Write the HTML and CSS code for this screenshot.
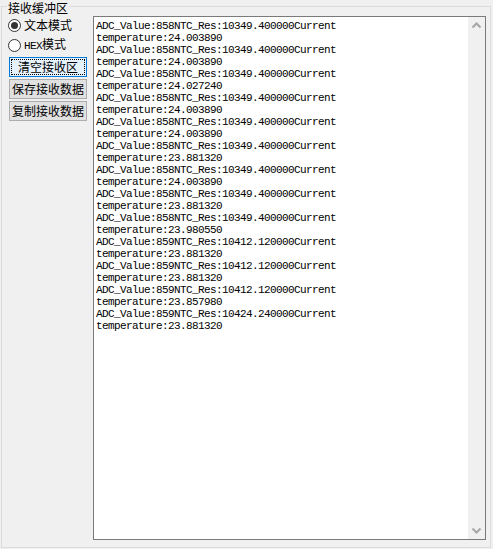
FILE: index.html
```html
<!DOCTYPE html>
<html>
    <head>
        <meta charset="UTF-8">
        <title>接收缓冲区</title>
        <link rel="stylesheet" href="styles.css">
    </head>
    <body>
        <div class="group">
            <span class="caption">接收缓冲区</span>
            <div class="side">
                <label class="opt"><span class="radio checked"></span><span>文本模式</span></label>
                <label class="opt"><span class="radio"></span><span><span class="latin">HEX</span>模式</span></label>
                <button class="btn focus">清空接收区</button>
                <button class="btn">保存接收数据</button>
                <button class="btn">复制接收数据</button>
            </div>
            <div class="recv">
<pre class="lines">ADC_Value:858NTC_Res:10349.400000Current
temperature:24.003890
ADC_Value:858NTC_Res:10349.400000Current
temperature:24.003890
ADC_Value:858NTC_Res:10349.400000Current
temperature:24.027240
ADC_Value:858NTC_Res:10349.400000Current
temperature:24.003890
ADC_Value:858NTC_Res:10349.400000Current
temperature:24.003890
ADC_Value:858NTC_Res:10349.400000Current
temperature:23.881320
ADC_Value:858NTC_Res:10349.400000Current
temperature:24.003890
ADC_Value:858NTC_Res:10349.400000Current
temperature:23.881320
ADC_Value:858NTC_Res:10349.400000Current
temperature:23.980550
ADC_Value:859NTC_Res:10412.120000Current
temperature:23.881320
ADC_Value:859NTC_Res:10412.120000Current
temperature:23.881320
ADC_Value:859NTC_Res:10412.120000Current
temperature:23.857980
ADC_Value:859NTC_Res:10424.240000Current
temperature:23.881320</pre>
                <div class="scroll">
                    <span class="arrow"><svg width="17" height="17" viewBox="0 0 17 17"><polyline points="4.5,10.5 8.5,6.5 12.5,10.5" fill="none" stroke="#a6a6a6" stroke-width="2"/></svg></span>
                    <span class="arrow"><svg width="17" height="17" viewBox="0 0 17 17"><polyline points="4.5,6.5 8.5,10.5 12.5,6.5" fill="none" stroke="#a6a6a6" stroke-width="2"/></svg></span>
                </div>
            </div>
        </div>
    </body>
</html>
```

FILE: styles.css
```css
body
{
    margin: 0;
    background: #f0f0f0;
    font-family: "Noto Sans CJK SC", sans-serif;
    font-size: 12px;
    color: #000;
    text-autospace: no-autospace;
}

.group
{
    position: relative;
    display: flex;
    gap: 6px;
    margin: 6px 0 0 1px;
    padding: 9px 4px 7px 7px;
    width: 490px;
    height: 542px;
    box-sizing: border-box;
    border: 1px solid #dcdcdc;
}
.group .caption
{
    position: absolute;
    top: -6px;
    left: 5px;
    padding: 0 1px;
    line-height: 13px;
    background: #f0f0f0;
}

.side
{
    display: flex;
    flex-direction: column;
    width: 78px;
    margin-top: -1px;
}
.side .opt
{
    display: flex;
    align-items: center;
    gap: 3px;
    height: 20px;
    margin-left: -1px;
    line-height: 12px;
}
.side .latin
{
    font-family: "Liberation Mono", monospace;
    font-size: 11px;
    letter-spacing: -0.6px;
}
.side .radio
{
    display: grid;
    place-items: center;
    width: 13px;
    height: 13px;
    box-sizing: border-box;
    border: 1px solid #333;
    border-radius: 50%;
    background: #fff;
}
.side .radio.checked::after
{
    content: "";
    width: 7px;
    height: 7px;
    border-radius: 50%;
    background: #333;
}
.side .btn
{
    position: relative;
    margin-top: 2px;
    padding: 0;
    width: 78px;
    height: 20px;
    font: inherit;
    line-height: 12px;
    color: #000;
    border: 1px solid #adadad;
    background: #e1e1e1;
}
.side .btn.focus
{
    border-color: #0078d7;
    background: #e5f1fb;
}
.side .btn.focus::after
{
    content: "";
    position: absolute;
    inset: 1px;
    border: 1px dotted #000;
}

.recv
{
    display: flex;
    width: 393px;
    height: 524px;
    box-sizing: border-box;
    border: 1px solid #7a7a7a;
    background: #fff;
}
.recv .lines
{
    flex: 1;
    margin: 0;
    padding: 3px 0 0 2px;
    font-family: "Liberation Mono", monospace;
    font-size: 11px;
    letter-spacing: -0.6px;
    line-height: 12px;
}
.recv .scroll
{
    display: flex;
    flex-direction: column;
    justify-content: space-between;
    width: 17px;
    background: #f0f0f0;
}
.recv .arrow { display: block; height: 17px; }
.recv .arrow svg { display: block; }
```
